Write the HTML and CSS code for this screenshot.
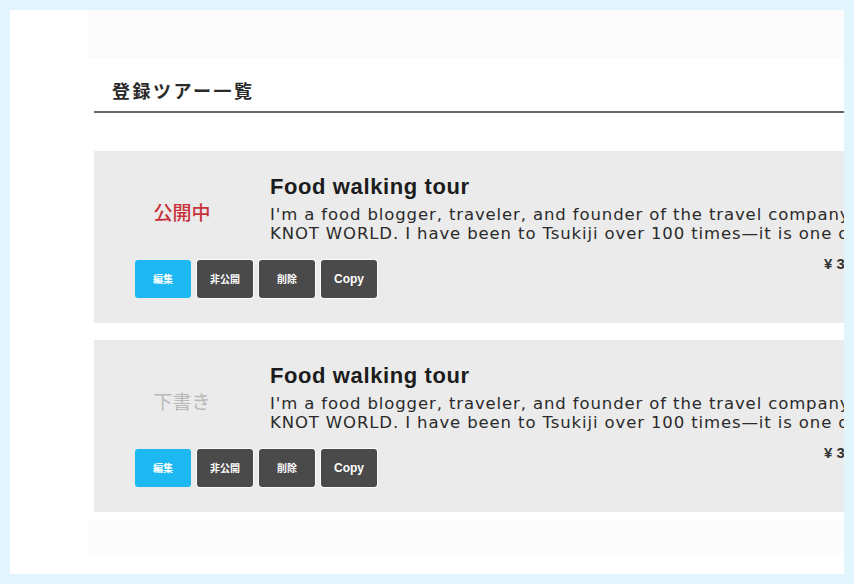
FILE: index.html
```html
<!DOCTYPE html>
<html lang="ja">
<head>
<meta charset="utf-8">
<title>登録ツアー一覧</title>
<link rel="stylesheet" href="styles.css">
</head>
<body>
<div class="frame">
  <div class="panel">
    <div class="topbar"></div>
    <div class="content">
      <h2 class="heading">登録ツアー一覧</h2>
      <div class="list">
        <div class="card">
          <div class="status status-public">公開中</div>
          <div class="body">
            <div class="title">Food walking tour</div>
            <p class="desc"><span class="line">I'm a food blogger, traveler, and founder of the travel company</span><span class="line">KNOT WORLD. I have been to Tsukiji over 100 times—it is one of my favorite places</span></p>
          </div>
          <div class="actions">
            <button class="btn btn-edit">編集</button>
            <button class="btn">非公開</button>
            <button class="btn">削除</button>
            <button class="btn btn-en">Copy</button>
            <span class="price">¥ 3,000</span>
          </div>
        </div>
        <div class="card">
          <div class="status status-draft">下書き</div>
          <div class="body">
            <div class="title">Food walking tour</div>
            <p class="desc"><span class="line">I'm a food blogger, traveler, and founder of the travel company</span><span class="line">KNOT WORLD. I have been to Tsukiji over 100 times—it is one of my favorite places</span></p>
          </div>
          <div class="actions">
            <button class="btn btn-edit">編集</button>
            <button class="btn">非公開</button>
            <button class="btn">削除</button>
            <button class="btn btn-en">Copy</button>
            <span class="price">¥ 3,000</span>
          </div>
        </div>
      </div>
    </div>
    <div class="bottombar"></div>
  </div>
</div>
</body>
</html>
```
FILE: styles.css
```css
html, body {
  margin: 0;
  padding: 0;
}
body {
  background: #e2f5fd;
  font-family: "Liberation Sans", "Noto Sans CJK JP", sans-serif;
  color: #222;
}
.frame {
  padding: 10px;
}
.panel {
  width: 834px;
  height: 564px;
  background: #fff;
  overflow: hidden;
}
.topbar {
  margin-left: 78px;
  height: 48px;
  background: #fbfbfb;
}
.content {
  padding-left: 84px;
  width: 820px;
}
.heading {
  margin: 19px 0 0;
  padding: 0 0 8px 18px;
  font-family: "Noto Sans CJK JP", sans-serif;
  font-size: 18px;
  line-height: 26px;
  font-weight: 700;
  letter-spacing: 2.5px;
  color: #2a2a2a;
  border-bottom: 2px solid #666;
}
.list {
  display: flex;
  flex-direction: column;
  gap: 17px;
  margin-top: 38px;
}
.card {
  background: #ebebeb;
  display: grid;
  grid-template-columns: 176px 1fr;
  padding: 23px 40px 25px 0;
  height: 172px;
  box-sizing: border-box;
}
.status {
  align-self: center;
  text-align: center;
  font-family: "Noto Sans CJK JP", sans-serif;
  font-size: 19px;
  font-weight: 500;
  line-height: 26px;
  padding-top: 6px;
}
.status-public {
  color: #c8323a;
}
.status-draft {
  color: #b9b9b9;
  font-weight: 400;
}
.body {
  min-width: 0;
  overflow: hidden;
}
.title {
  font-size: 22px;
  line-height: 26px;
  font-weight: 700;
  letter-spacing: 0.6px;
  color: #1c1c1c;
}
.desc {
  margin: 5px 0 0;
  font-family: "DejaVu Sans", sans-serif;
  font-size: 16.5px;
  line-height: 19px;
  letter-spacing: 0.88px;
  color: #2a2a2a;
}
.line {
  display: block;
  white-space: nowrap;
}
.actions {
  grid-column: 1 / 3;
  display: flex;
  align-items: flex-start;
  gap: 6px;
  padding-left: 41px;
  margin-top: 11px;
}
.btn {
  width: 56px;
  height: 38px;
  margin-top: 5px;
  border: none;
  border-radius: 3px;
  background: #4a4a4a;
  color: #fff;
  font-family: "Noto Sans CJK JP", sans-serif;
  font-size: 10px;
  font-weight: 700;
  padding: 0;
  box-shadow: 0 0 0 1px #fafafa;
}
.btn-edit {
  background: #1db7f1;
  box-shadow: none;
}
.btn-en {
  font-family: "Liberation Sans", sans-serif;
  font-size: 12px;
}
.price {
  margin-left: auto;
  font-size: 15px;
  line-height: 18px;
  font-weight: 700;
  color: #333;
}
.bottombar {
  margin: 8px 0 0 78px;
  height: 34px;
  background: #fcfcfc;
}
```
